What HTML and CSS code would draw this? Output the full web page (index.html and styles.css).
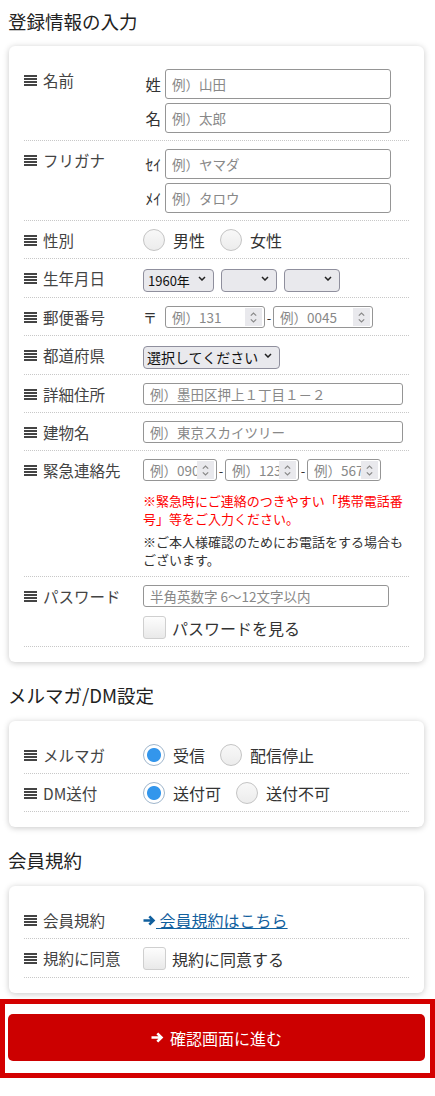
FILE: index.html
```html
<!DOCTYPE html>
<html lang="ja">
<head>
<meta charset="utf-8">
<title>登録情報の入力</title>
<link rel="stylesheet" href="styles.css">
</head>
<body>
<div class="page">
  <h2 class="sec-title first">登録情報の入力</h2>
  <div class="card">
    <div class="row">
      <div class="label"><svg class="ico" viewBox="0 0 13 11"><rect y="0" width="13" height="2"/><rect y="3" width="13" height="2"/><rect y="6" width="13" height="2"/><rect y="9" width="13" height="2"/></svg>名前</div>
      <div class="field">
        <div class="pair"><span class="sub">姓</span><input class="txt tall w-name" placeholder="例）山田"></div>
        <div class="pair"><span class="sub">名</span><input class="txt tall w-name" placeholder="例）太郎"></div>
      </div>
    </div>
    <div class="row">
      <div class="label"><svg class="ico" viewBox="0 0 13 11"><rect y="0" width="13" height="2"/><rect y="3" width="13" height="2"/><rect y="6" width="13" height="2"/><rect y="9" width="13" height="2"/></svg>フリガナ</div>
      <div class="field">
        <div class="pair"><span class="sub">ｾｲ</span><input class="txt tall w-name" placeholder="例）ヤマダ"></div>
        <div class="pair"><span class="sub">ﾒｲ</span><input class="txt tall w-name" placeholder="例）タロウ"></div>
      </div>
    </div>
    <div class="row">
      <div class="label"><svg class="ico" viewBox="0 0 13 11"><rect y="0" width="13" height="2"/><rect y="3" width="13" height="2"/><rect y="6" width="13" height="2"/><rect y="9" width="13" height="2"/></svg>性別</div>
      <div class="field">
        <div class="radios">
          <label class="opt"><input type="radio" class="radio" name="sex">男性</label>
          <label class="opt"><input type="radio" class="radio" name="sex">女性</label>
        </div>
      </div>
    </div>
    <div class="row">
      <div class="label"><svg class="ico" viewBox="0 0 13 11"><rect y="0" width="13" height="2"/><rect y="3" width="13" height="2"/><rect y="6" width="13" height="2"/><rect y="9" width="13" height="2"/></svg>生年月日</div>
      <div class="field">
        <div class="selects">
          <span class="sel w-year"><select><option>1960年</option></select><svg class="chev" viewBox="0 0 8 5"><path d="M1 1l3 3 3-3"/></svg></span>
          <span class="sel w-month"><select><option></option></select><svg class="chev" viewBox="0 0 8 5"><path d="M1 1l3 3 3-3"/></svg></span>
          <span class="sel w-day"><select><option></option></select><svg class="chev" viewBox="0 0 8 5"><path d="M1 1l3 3 3-3"/></svg></span>
        </div>
      </div>
    </div>
    <div class="row">
      <div class="label"><svg class="ico" viewBox="0 0 13 11"><rect y="0" width="13" height="2"/><rect y="3" width="13" height="2"/><rect y="6" width="13" height="2"/><rect y="9" width="13" height="2"/></svg>郵便番号</div>
      <div class="field">
        <div class="inline">
          <span class="yubin">〒</span>
          <span class="numbox w-zip1"><input placeholder="例）131"><span class="spin"><svg viewBox="0 0 10 14"><path d="M2 5l3-3 3 3M2 9l3 3 3-3"/></svg></span></span>
          <span class="dash">-</span>
          <span class="numbox w-zip2"><input placeholder="例）0045"><span class="spin"><svg viewBox="0 0 10 14"><path d="M2 5l3-3 3 3M2 9l3 3 3-3"/></svg></span></span>
        </div>
      </div>
    </div>
    <div class="row">
      <div class="label"><svg class="ico" viewBox="0 0 13 11"><rect y="0" width="13" height="2"/><rect y="3" width="13" height="2"/><rect y="6" width="13" height="2"/><rect y="9" width="13" height="2"/></svg>都道府県</div>
      <div class="field">
        <div class="selects">
          <span class="sel w-pref"><select class="big"><option>選択してください</option></select><svg class="chev" viewBox="0 0 8 5"><path d="M1 1l3 3 3-3"/></svg></span>
        </div>
      </div>
    </div>
    <div class="row">
      <div class="label"><svg class="ico" viewBox="0 0 13 11"><rect y="0" width="13" height="2"/><rect y="3" width="13" height="2"/><rect y="6" width="13" height="2"/><rect y="9" width="13" height="2"/></svg>詳細住所</div>
      <div class="field"><input class="txt w-addr" placeholder="例）墨田区押上１丁目１－２"></div>
    </div>
    <div class="row">
      <div class="label"><svg class="ico" viewBox="0 0 13 11"><rect y="0" width="13" height="2"/><rect y="3" width="13" height="2"/><rect y="6" width="13" height="2"/><rect y="9" width="13" height="2"/></svg>建物名</div>
      <div class="field"><input class="txt w-addr" placeholder="例）東京スカイツリー"></div>
    </div>
    <div class="row">
      <div class="label"><svg class="ico" viewBox="0 0 13 11"><rect y="0" width="13" height="2"/><rect y="3" width="13" height="2"/><rect y="6" width="13" height="2"/><rect y="9" width="13" height="2"/></svg>緊急連絡先</div>
      <div class="field">
        <div class="inline">
          <span class="numbox w-tel"><input placeholder="例）0901"><span class="spin"><svg viewBox="0 0 10 14"><path d="M2 5l3-3 3 3M2 9l3 3 3-3"/></svg></span></span>
          <span class="dash">-</span>
          <span class="numbox w-tel"><input placeholder="例）1234"><span class="spin"><svg viewBox="0 0 10 14"><path d="M2 5l3-3 3 3M2 9l3 3 3-3"/></svg></span></span>
          <span class="dash">-</span>
          <span class="numbox w-tel"><input placeholder="例）5678"><span class="spin"><svg viewBox="0 0 10 14"><path d="M2 5l3-3 3 3M2 9l3 3 3-3"/></svg></span></span>
        </div>
        <p class="note red">※緊急時にご連絡のつきやすい「携帯電話番号」等をご入力ください。</p>
        <p class="note">※ご本人様確認のためにお電話をする場合もございます。</p>
      </div>
    </div>
    <div class="row">
      <div class="label"><svg class="ico" viewBox="0 0 13 11"><rect y="0" width="13" height="2"/><rect y="3" width="13" height="2"/><rect y="6" width="13" height="2"/><rect y="9" width="13" height="2"/></svg>パスワード</div>
      <div class="field">
        <input class="txt w-pw" placeholder="半角英数字 6～12文字以内">
        <label class="check"><input type="checkbox" class="cbox">パスワードを見る</label>
      </div>
    </div>
  </div>

  <h2 class="sec-title">メルマガ/DM設定</h2>
  <div class="card">
    <div class="row">
      <div class="label"><svg class="ico" viewBox="0 0 13 11"><rect y="0" width="13" height="2"/><rect y="3" width="13" height="2"/><rect y="6" width="13" height="2"/><rect y="9" width="13" height="2"/></svg>メルマガ</div>
      <div class="field">
        <div class="radios">
          <label class="opt"><input type="radio" class="radio" name="mm" checked>受信</label>
          <label class="opt"><input type="radio" class="radio" name="mm">配信停止</label>
        </div>
      </div>
    </div>
    <div class="row">
      <div class="label"><svg class="ico" viewBox="0 0 13 11"><rect y="0" width="13" height="2"/><rect y="3" width="13" height="2"/><rect y="6" width="13" height="2"/><rect y="9" width="13" height="2"/></svg>DM送付</div>
      <div class="field">
        <div class="radios">
          <label class="opt"><input type="radio" class="radio" name="dm" checked>送付可</label>
          <label class="opt"><input type="radio" class="radio" name="dm">送付不可</label>
        </div>
      </div>
    </div>
  </div>

  <h2 class="sec-title">会員規約</h2>
  <div class="card">
    <div class="row">
      <div class="label"><svg class="ico" viewBox="0 0 13 11"><rect y="0" width="13" height="2"/><rect y="3" width="13" height="2"/><rect y="6" width="13" height="2"/><rect y="9" width="13" height="2"/></svg>会員規約</div>
      <div class="field">
        <a class="link" href="#"><svg class="arrow" viewBox="0 0 13 11"><path d="M0.5 5.5H10.5M6.3 1.3L10.5 5.5L6.3 9.7"/></svg><span class="link-text"> 会員規約はこちら</span></a>
      </div>
    </div>
    <div class="row">
      <div class="label"><svg class="ico" viewBox="0 0 13 11"><rect y="0" width="13" height="2"/><rect y="3" width="13" height="2"/><rect y="6" width="13" height="2"/><rect y="9" width="13" height="2"/></svg>規約に同意</div>
      <div class="field">
        <label class="check first"><input type="checkbox" class="cbox">規約に同意する</label>
      </div>
    </div>
  </div>
</div>

<div class="submit-box">
  <button class="btn" type="button"><svg class="arrow" viewBox="0 0 13 11"><path d="M0.5 5.5H10.5M6.3 1.3L10.5 5.5L6.3 9.7"/></svg>確認画面に進む</button>
</div>
</body>
</html>
```

FILE: styles.css
```css
* { box-sizing: border-box; }

body {
  margin: 0;
  background: #fff;
  color: #333;
  font-family: "Noto Sans CJK JP", "Noto Sans", sans-serif;
}

.page {
  padding: 0 11px 0 9px;
}

.sec-title {
  margin: 21px 0 14px -1px;
  font-size: 18.5px;
  line-height: 24px;
  font-weight: normal;
  color: #222;
}
.sec-title.first { margin-top: 9px; margin-bottom: 13px; }

.card {
  background: #fff;
  border-radius: 6px;
  box-shadow: 0 1px 6px rgba(0, 0, 0, 0.22);
  padding: 15px;
}

.row {
  display: flex;
  padding: 8px 0 7px;
  border-bottom: 1px dotted #c8c8c8;
}

.label {
  width: 119px;
  flex: none;
  height: 22px;
  display: flex;
  align-items: center;
  gap: 6px;
  font-size: 15.5px;
  line-height: 22px;
  color: #444;
}

.ico {
  width: 13px;
  height: 11px;
  fill: #444;
  flex: none;
}

.field {
  flex: 1;
  min-width: 0;
  display: flex;
  flex-direction: column;
  align-items: flex-start;
}

.pair {
  display: flex;
  align-items: center;
  gap: 4px;
}
.pair + .pair { margin-top: 4px; }

.sub {
  width: 18px;
  text-align: right;
  font-size: 15.5px;
  color: #333;
}

.txt {
  height: 22px;
  border: 1px solid #959595;
  border-radius: 3px;
  padding: 0 6px;
  font-family: inherit;
  font-size: 13.5px;
  color: #333;
  background: #fff;
  outline: none;
}
.txt.tall { height: 30px; }
.txt::placeholder, .numbox input::placeholder { color: #888; }

.w-name { width: 226px; }
.w-addr { width: 260px; }
.w-pw { width: 246px; }

.radios {
  display: flex;
  align-items: center;
  height: 22px;
  font-size: 16px;
  color: #333;
}

.opt {
  display: flex;
  align-items: center;
  gap: 8px;
  margin-right: 15px;
}

.radio {
  appearance: none;
  -webkit-appearance: none;
  margin: 0;
  width: 22px;
  height: 22px;
  border-radius: 50%;
  border: 1px solid #c4c4c4;
  background: linear-gradient(#f8f8f8, #ececec);
}
.radio:checked {
  border-color: #9fb6cc;
  background: radial-gradient(circle, #3396ec 0 6.5px, #fff 7.5px);
}

.selects {
  display: flex;
  gap: 7px;
}

.sel {
  position: relative;
  display: block;
  height: 23px;
}
.sel select {
  appearance: none;
  -webkit-appearance: none;
  width: 100%;
  height: 23px;
  margin: 0;
  border: 1px solid #8f8f9d;
  border-radius: 4px;
  background: #e9e9ed;
  padding: 0 14px 0 4px;
  font-family: inherit;
  font-size: 13px;
  color: #111;
}
.sel select.big { font-size: 14px; padding-left: 3px; }
.chev {
  position: absolute;
  right: 8px;
  top: 9px;
  width: 8px;
  height: 5px;
  fill: none;
  stroke: #222;
  stroke-width: 1.5;
  pointer-events: none;
}
.w-year { width: 71px; }
.w-month { width: 56px; }
.w-day { width: 56px; }
.w-pref { width: 137px; }

.inline {
  display: flex;
  align-items: center;
  height: 22px;
}

.yubin {
  font-size: 14px;
  color: #333;
  width: 22px;
}

.dash {
  font-size: 13px;
  color: #333;
  width: 8px;
  text-align: center;
}

.numbox {
  display: flex;
  align-items: center;
  height: 22px;
  border: 1px solid #959595;
  border-radius: 3px;
  padding-right: 2px;
  background: #fff;
}
.numbox input {
  flex: 1;
  min-width: 0;
  height: 100%;
  border: none;
  outline: none;
  background: transparent;
  padding: 0 0 0 6px;
  font-family: inherit;
  font-size: 13.5px;
  color: #333;
}
.spin {
  flex: none;
  width: 17px;
  height: 18px;
  background: #e9e9ed;
  display: flex;
  align-items: center;
  justify-content: center;
}
.spin svg {
  width: 9px;
  height: 13px;
  fill: none;
  stroke: #888;
  stroke-width: 1.3;
}
.w-zip1 { width: 100px; }
.w-zip2 { width: 100px; }
.w-tel { width: 74px; }

.note {
  margin: 5px 0 0;
  font-size: 13px;
  line-height: 18px;
  color: #333;
  width: 262px;
}
.note.red {
  margin-top: 11px;
  color: #f00;
}

.check {
  display: flex;
  align-items: center;
  gap: 6px;
  margin-top: 9px;
  font-size: 16px;
  color: #333;
  height: 23px;
}
.check.first { margin-top: 0; }

.cbox {
  appearance: none;
  -webkit-appearance: none;
  margin: 0;
  width: 23px;
  height: 23px;
  border: 1px solid #cfcfcf;
  border-radius: 3px;
  background: linear-gradient(#fdfdfd, #e9e9e9);
}

.link {
  display: flex;
  align-items: center;
  height: 22px;
  font-size: 16px;
  color: #11609e;
  text-decoration: none;
}
.link .arrow {
  width: 13px;
  height: 11px;
  fill: none;
  stroke: #11609e;
  stroke-width: 2.6;
  flex: none;
}
.link-text {
  text-decoration: underline;
  white-space: pre;
}

.submit-box {
  margin-top: 6px;
  border: 5px solid #d40000;
  padding: 10px 5px 12px 3px;
}

.btn {
  width: 100%;
  height: 47px;
  border: none;
  border-radius: 5px;
  background: #cc0000;
  color: #fff;
  font-family: inherit;
  font-size: 16px;
  display: flex;
  align-items: center;
  justify-content: center;
  gap: 6px;
  padding: 0;
}
.btn .arrow {
  width: 13px;
  height: 11px;
  fill: none;
  stroke: #fff;
  stroke-width: 2.6;
}
```
